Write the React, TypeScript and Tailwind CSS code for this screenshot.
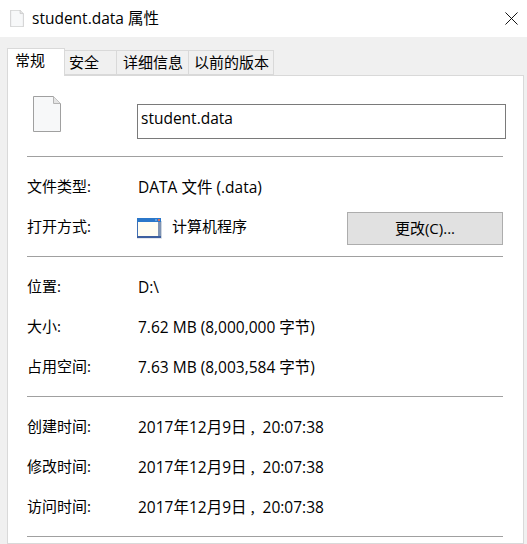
const font = "font-['Open_Sans','Noto_Sans_CJK_SC',sans-serif]";

function FileIcon({ className }: { className: string }) {
  return (
    <svg viewBox="0 0 28 36" className={className} fill="none">
      <path d="M0.5 0.5H20.5L27.5 7.5V35.5H0.5Z" fill="#f7f8f9" stroke="#a0a0a0" />
      <path d="M20.5 0.5V7.5H27.5" fill="#e4e4e4" stroke="#b4b4b4" />
    </svg>
  );
}

function Divider() {
  return <div className="h-px bg-[#a0a0a0]" />;
}

function Row({ label, value }: { label: string; value: React.ReactNode }) {
  return (
    <div className="flex h-10 items-center">
      <div className="-mt-[2px] w-[111px] shrink-0 text-[15px]">{label}</div>
      <div className="text-[15.5px]">{value}</div>
    </div>
  );
}

function DateValue() {
  return (
    <span>
      2017年12月9日<span className="ml-[3px] text-[13px]">，</span>20:07:38
    </span>
  );
}

export default function App() {
  return (
    <div className={`flex h-[544px] w-[527px] flex-col overflow-hidden bg-[#f0f0f0] text-[15px] leading-5 text-black ${font}`}>
      <div className="flex h-[37px] shrink-0 items-center justify-between bg-white pl-[10px] pr-[6px]">
        <div className="flex items-center gap-2">
          <FileIcon className="h-[17px] w-[14px]" />
          <span className="-mt-[2px] text-[15.5px]">student.data 属性</span>
        </div>
        <svg viewBox="0 0 14 14" className="mr-[3px] h-[13px] w-[13px]" stroke="#000" strokeWidth="1">
          <path d="M0.5 0.5L13.5 13.5M13.5 0.5L0.5 13.5" />
        </svg>
      </div>

      <div className="flex h-[38px] shrink-0 items-end pl-[7px] pt-[10px]">
        <div className="relative z-10 -mb-px h-[28px] w-[58px] border border-b-0 border-[#d9d9d9] bg-white pl-[7px] pt-[1px]">常规</div>
        <div className="flex h-[25px] w-[52px] items-center border border-l-0 border-[#d9d9d9] pb-[2px] pl-[4px]">安全</div>
        <div className="flex h-[25px] w-[72px] items-center border border-l-0 border-[#d9d9d9] pb-[2px] pl-[6px]">详细信息</div>
        <div className="flex h-[25px] w-[85px] items-center border border-l-0 border-[#d9d9d9] pb-[2px] pl-[5px]">以前的版本</div>
      </div>

      <div className="ml-[7px] w-[517px] flex-1 border border-[#d9d9d9] bg-white pl-[19px] pr-[20px]">
        <div className="flex h-[80px] items-start pt-[20px]">
          <FileIcon className="ml-[6px] h-[36px] w-[28px] shrink-0" />
          <div className="ml-[76px] mt-[8px] flex h-[35px] w-[369px] shrink-0 items-start border border-[#7a7a7a] pl-[3px] pt-[3px] text-[15.5px]">student.data</div>
        </div>
        <Divider />
        <div className="flex h-[99px] flex-col pt-[10px]">
          <Row label="文件类型:" value="DATA 文件 (.data)" />
          <div className="flex h-10 items-center">
            <div className="-mt-[2px] w-[110px] shrink-0">打开方式:</div>
            <svg viewBox="0 0 25 21" className="mt-[2px] h-[21px] w-[25px] shrink-0">
              <rect x="24" y="3" width="1" height="17" fill="#cfd6df" />
              <rect x="0" y="0" width="24" height="20" fill="#3f6fb5" />
              <rect x="0" y="0" width="24" height="4" fill="#2b77c9" />
              <rect x="18" y="1" width="2" height="2" fill="#5aa0e0" />
              <rect x="21" y="1" width="2" height="2" fill="#d9705a" />
              <rect x="1" y="4" width="20" height="14" fill="#fffdf2" />
              <rect x="21" y="4" width="3" height="16" fill="#7f94b3" />
              <rect x="0" y="18" width="24" height="2" fill="#3d5f9e" />
              <rect x="0" y="20" width="25" height="1" fill="#e4e7ec" />
            </svg>
            <span className="-mt-[2px] ml-[10px]">计算机程序</span>
            <div className="ml-auto mt-[2px] flex h-[33px] w-[156px] items-center justify-center border border-[#adadad] bg-[#e1e1e1]">更改(C)...</div>
          </div>
        </div>
        <Divider />
        <div className="flex h-[139px] flex-col pt-[10px]">
          <Row label="位置:" value="D:\" />
          <Row label="大小:" value="7.62 MB (8,000,000 字节)" />
          <Row label="占用空间:" value="7.63 MB (8,003,584 字节)" />
        </div>
        <Divider />
        <div className="flex h-[139px] flex-col pt-[10px]">
          <Row label="创建时间:" value={<DateValue />} />
          <Row label="修改时间:" value={<DateValue />} />
          <Row label="访问时间:" value={<DateValue />} />
        </div>
        <Divider />
      </div>
    </div>
  );
}
